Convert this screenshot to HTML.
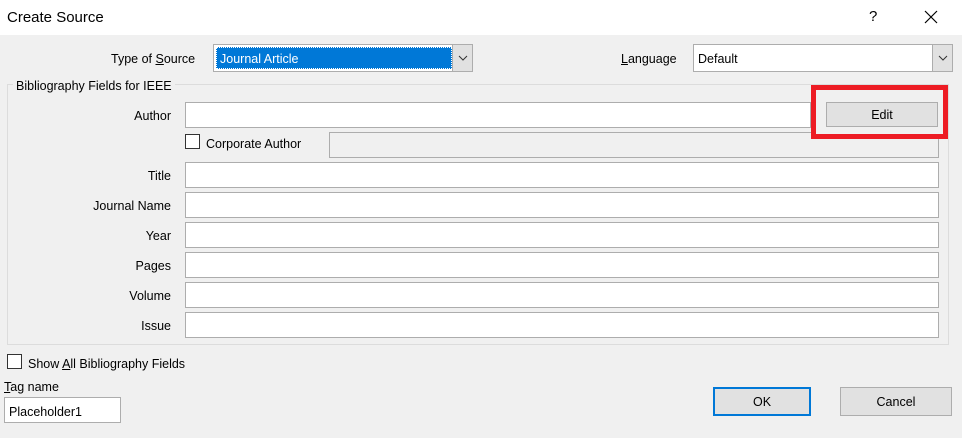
<!DOCTYPE html>
<html><head><style>
*{box-sizing:border-box;margin:0;padding:0}
body{width:962px;height:438px;background:#f0f0f0;font-family:"Liberation Sans",sans-serif;font-size:12.5px;color:#000;position:relative;overflow:hidden}
.a{position:absolute}
.tb{left:0;top:0;width:962px;height:35px;background:#fff}
.in{position:absolute;background:#fff;border:1px solid #adadad}
.lbl{position:absolute;text-align:right;width:171px;left:0}
.cb{position:absolute;width:15px;height:15px;background:#fff;border:1px solid #333}
.btn{position:absolute;background:#e1e1e1;border:1px solid #adadad;text-align:center}
.dd{position:absolute;top:0;right:0;width:20px;height:100%;background:#e1e1e1;border-left:1px solid #adadad}
u{text-decoration:underline}
</style></head><body>
<div class="a tb"></div>
<div class="a" style="left:7px;top:9px;font-size:15px">Create Source</div>
<div class="a" style="left:869px;top:8px;font-size:15px">?</div>
<svg class="a" style="left:924px;top:10px" width="14" height="14"><path d="M1 1L13 13M13 1L1 13" stroke="#000" stroke-width="1.2"/></svg>

<div class="a" style="left:111px;top:52px">Type of <u>S</u>ource</div>
<div class="in" style="left:213px;top:44px;width:260px;height:28px">
 <div class="a" style="left:2px;top:2px;width:236px;height:22px;background:#0078d7;color:#fff;padding:4px 3px;border:1px dotted #fff">Journal Article</div>
 <div class="dd"><svg width="20" height="26"><path d="M6 11L10 15L14 11" stroke="#333" fill="none"/></svg></div>
</div>
<div class="a" style="left:621px;top:52px"><u>L</u>anguage</div>
<div class="in" style="left:693px;top:44px;width:260px;height:28px">
 <div class="a" style="left:4px;top:7px">Default</div>
 <div class="dd"><svg width="20" height="26"><path d="M6 11L10 15L14 11" stroke="#333" fill="none"/></svg></div>
</div>

<div class="a" style="left:7px;top:84px;width:942px;height:261px;border:1px solid #dcdcdc"></div>
<div class="a" style="left:13px;top:79px;background:#f0f0f0;padding:0 3px">Bibliography Fields for IEEE</div>

<div class="lbl" style="top:109px">Author</div>
<div class="in" style="left:185px;top:102px;width:626px;height:26px"></div>
<div class="cb" style="left:185px;top:134px"></div>
<div class="a" style="left:206px;top:137px">Corporate Author</div>
<div class="in" style="left:329px;top:132px;width:610px;height:26px;background:#f0f0f0"></div>

<div class="lbl" style="top:169px">Title</div>
<div class="in" style="left:185px;top:162px;width:754px;height:26px"></div>
<div class="lbl" style="top:199px">Journal Name</div>
<div class="in" style="left:185px;top:192px;width:754px;height:26px"></div>
<div class="lbl" style="top:229px">Year</div>
<div class="in" style="left:185px;top:222px;width:754px;height:26px"></div>
<div class="lbl" style="top:259px">Pages</div>
<div class="in" style="left:185px;top:252px;width:754px;height:26px"></div>
<div class="lbl" style="top:289px">Volume</div>
<div class="in" style="left:185px;top:282px;width:754px;height:26px"></div>
<div class="lbl" style="top:319px">Issue</div>
<div class="in" style="left:185px;top:312px;width:754px;height:26px"></div>

<div class="a" style="left:811px;top:85px;width:137px;height:54px;border:5px solid #ed1c24;background:#f0f0f0"></div>
<div class="btn" style="left:826px;top:102px;width:112px;height:25px;line-height:25px">Edit</div>

<div class="cb" style="left:7px;top:354px"></div>
<div class="a" style="left:28px;top:357px">Show <u>A</u>ll Bibliography Fields</div>
<div class="a" style="left:4px;top:380px"><u>T</u>ag name</div>
<div class="in" style="left:4px;top:397px;width:117px;height:26px"><div class="a" style="left:4px;top:7px">Placeholder1</div></div>
<div class="btn" style="left:713px;top:387px;width:98px;height:29px;line-height:27px;border:2px solid #0078d7">OK</div>
<div class="btn" style="left:840px;top:387px;width:112px;height:29px;line-height:29px">Cancel</div>
</body></html>
